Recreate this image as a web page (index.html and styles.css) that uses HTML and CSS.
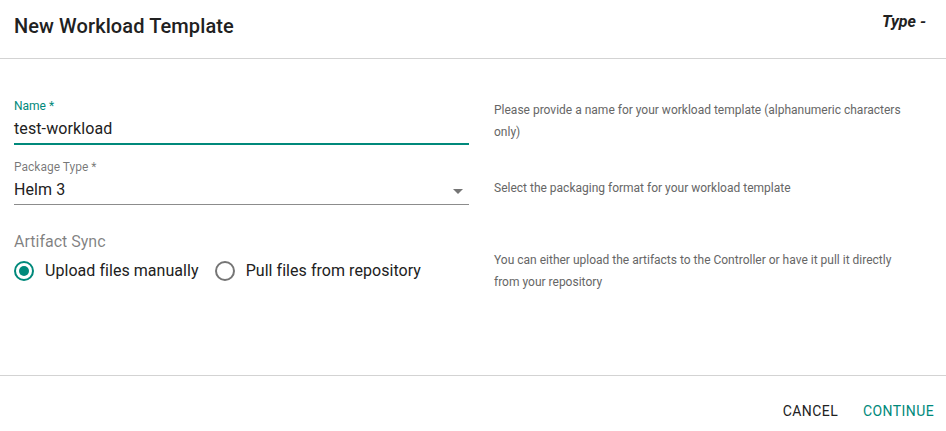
FILE: index.html
```html
<!DOCTYPE html>
<html>
<head>
<meta charset="utf-8">
<link rel="stylesheet" href="styles.css">
</head>
<body>
<div class="dialog">
  <header class="dialog-header">
    <h1 class="dialog-title">New Workload Template</h1>
    <span class="dialog-type">Type -</span>
  </header>
  <main class="dialog-body">
    <section class="row row-name">
      <div class="field">
        <label class="field-label field-label-active">Name *</label>
        <div class="field-input field-input-active">test-workload</div>
      </div>
      <p class="hint hint-name">Please provide a name for your workload template (alphanumeric characters only)</p>
    </section>
    <section class="row row-package">
      <div class="field">
        <label class="field-label">Package Type *</label>
        <div class="field-input field-select">
          <span>Helm 3</span>
          <svg class="select-arrow" width="10" height="5" viewBox="0 0 10 5"><path d="M0 0L5 5L10 0Z" fill="#757575"/></svg>
        </div>
      </div>
      <p class="hint hint-package">Select the packaging format for your workload template</p>
    </section>
    <section class="row row-sync">
      <div class="field">
        <div class="group-label">Artifact Sync</div>
        <div class="radios">
          <label class="radio">
            <span class="radio-circle radio-checked"><span class="radio-dot"></span></span>
            <span class="radio-text">Upload files manually</span>
          </label>
          <label class="radio">
            <span class="radio-circle"></span>
            <span class="radio-text">Pull files from repository</span>
          </label>
        </div>
      </div>
      <p class="hint hint-sync">You can either upload the artifacts to the Controller or have it pull it directly from your repository</p>
    </section>
  </main>
  <footer class="dialog-footer">
    <button class="btn btn-cancel">CANCEL</button>
    <button class="btn btn-continue">CONTINUE</button>
  </footer>
</div>
</body>
</html>
```

FILE: styles.css
```css
* { box-sizing: border-box; }
html, body {
  margin: 0;
  padding: 0;
  background: #fff;
  font-family: Roboto, "Liberation Sans", sans-serif;
}
.dialog {
  width: 946px;
  height: 431px;
  display: flex;
  flex-direction: column;
}
.dialog-header {
  height: 59px;
  display: flex;
  justify-content: space-between;
  align-items: flex-start;
  padding: 0 20px 0 14px;
  border-bottom: 1px solid #d3d3d3;
}
.dialog-title {
  margin: 14px 0 0;
  font-size: 20px;
  line-height: 24px;
  font-weight: 500;
  letter-spacing: 0.1px;
  color: #212121;
}
.dialog-type {
  margin-top: 11px;
  font-size: 16px;
  line-height: 22px;
  font-style: italic;
  font-weight: 700;
  color: #212121;
}
.dialog-body {
  flex: 1;
  padding: 39px 14px 0;
}
.row {
  display: grid;
  grid-template-columns: 455px 1fr;
  column-gap: 25px;
  align-items: start;
}
.row-package { margin-top: 14px; }
.row-sync { margin-top: 25px; }
.field { display: flex; flex-direction: column; }
.field-label {
  font-size: 12px;
  line-height: 16px;
  color: rgba(0,0,0,0.54);
}
.field-label-active { color: #00897b; }
.field-input {
  margin-top: 3px;
  font-size: 16px;
  line-height: 24px;
  padding-bottom: 2px;
  color: #212121;
  letter-spacing: 0.1px;
  border-bottom: 1px solid #8c8c8c;
}
.field-input-active {
  border-bottom: 2px solid #00897b;
  padding-bottom: 2px;
}
.field-select {
  display: flex;
  justify-content: space-between;
  align-items: center;
}
.select-arrow { margin-right: 6px; margin-top: 2px; }
.hint {
  margin: 0;
  font-size: 12px;
  line-height: 22px;
  color: #666;
  padding-right: 20px;
}
.hint-name { margin-top: 1px; }
.hint-package { margin-top: 18px; }
.hint-sync { margin-top: 19px; }
.group-label {
  font-size: 16px;
  line-height: 24px;
  color: rgba(0,0,0,0.5);
}
.radios {
  display: flex;
  align-items: center;
  gap: 16px;
  margin-top: 5px;
}
.radio {
  display: flex;
  align-items: center;
  gap: 11px;
  font-size: 16px;
  line-height: 24px;
  letter-spacing: 0.05px;
  color: #212121;
}
.radio-circle {
  width: 20px;
  height: 20px;
  border-radius: 50%;
  border: 2px solid #757575;
  display: flex;
  align-items: center;
  justify-content: center;
}
.radio-checked { border-color: #00897b; }
.radio-dot {
  width: 10px;
  height: 10px;
  border-radius: 50%;
  background: #00897b;
}
.dialog-footer {
  height: 56px;
  border-top: 1px solid #d3d3d3;
  display: flex;
  justify-content: flex-end;
  align-items: center;
  gap: 9px;
  padding: 14px 4px 0 0;
}
.btn {
  background: none;
  border: none;
  font-family: Roboto, "Liberation Sans", sans-serif;
  font-size: 14px;
  font-weight: 400;
  letter-spacing: 0.4px;
  padding: 6px 8px;
  cursor: pointer;
}
.btn-cancel { color: #212121; }
.btn-continue { color: #00897b; }
```
